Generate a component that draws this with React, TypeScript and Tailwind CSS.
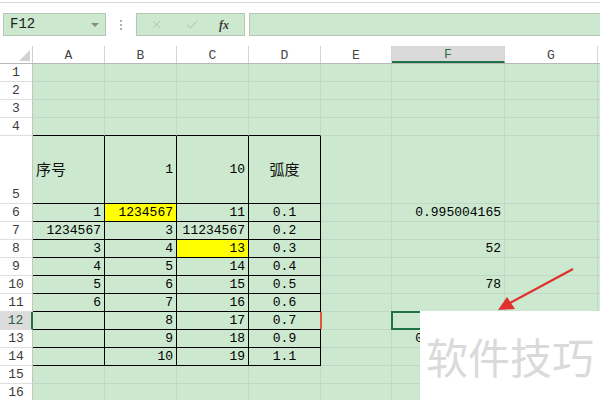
import { X, Check } from "lucide-react";

type Cell = { t: string; a?: "l" | "r" | "c"; y?: boolean; cjk?: boolean };
type Row = { n: number; h: string; cells: Record<string, Cell> };

const cols = [
	{ k: "A", w: "w-[72px]" },
	{ k: "B", w: "w-[72px]" },
	{ k: "C", w: "w-[72px]" },
	{ k: "D", w: "w-[72px]" },
	{ k: "E", w: "w-[71px]" },
	{ k: "F", w: "w-[113px]" },
	{ k: "G", w: "w-[93px]" },
];

const tableCols = ["A", "B", "C", "D"];

const body: [string, string, string, string][] = [
	["1", "1234567", "11", "0.1"],
	["1234567", "3", "11234567", "0.2"],
	["3", "4", "13", "0.3"],
	["4", "5", "14", "0.4"],
	["5", "6", "15", "0.5"],
	["6", "7", "16", "0.6"],
	["", "8", "17", "0.7"],
	["", "9", "18", "0.9"],
	["", "10", "19", "1.1"],
];

const fCol: Record<number, string> = {
	6: "0.995004165",
	8: "52",
	10: "78",
	13: "0.921060994",
};

const rows: Row[] = [];
for (let n = 1; n <= 16; n++) {
	const cells: Record<string, Cell> = {};
	if (n === 5) {
		cells.A = { t: "序号", a: "l", cjk: true };
		cells.B = { t: "1", a: "r" };
		cells.C = { t: "10", a: "r" };
		cells.D = { t: "弧度", a: "c", cjk: true };
	}
	if (n >= 6 && n <= 14) {
		const v = body[n - 6];
		cells.A = { t: v[0], a: "r" };
		cells.B = { t: v[1], a: "r", y: n === 6 };
		cells.C = { t: v[2], a: "r", y: n === 8 };
		cells.D = { t: v[3], a: "c" };
	}
	if (fCol[n]) cells.F = { t: fCol[n], a: "r" };
	rows.push({ n, h: n === 5 ? "h-[68px]" : "h-[18px]", cells });
}

const inTable = (r: number, k: string) => tableCols.includes(k) && r >= 5 && r <= 14;

const SheetCell = ({ row, k, w }: { row: Row; k: string; w: string }) => {
	const c = row.cells[k];
	const right = inTable(row.n, k) ? "border-r-black" : "border-r-[#c3d5c5]";
	const bottom =
		tableCols.includes(k) && row.n >= 4 && row.n <= 14 ? "border-b-black" : "border-b-[#c3d5c5]";
	const align =
		c?.a === "r" ? "justify-end pr-[3px]" : c?.a === "c" ? "justify-center" : "justify-start pl-[3px]";
	return (
		<div
			className={`${w} shrink-0 relative flex items-center border-r border-b ${right} ${bottom} ${align} ${
				c?.y ? "bg-[#ffff00]" : ""
			}`}
		>
			{c && (
				<span
					className={
						c.cjk
							? "text-[15px] text-[#111] font-['Noto_Sans_CJK_SC',sans-serif]"
							: "text-[13px] text-black font-['Liberation_Mono',monospace] leading-none"
					}
				>
					{c.t}
				</span>
			)}
			{row.n === 12 && k === "F" && (
				<div className="absolute -top-px -left-px -right-px -bottom-px border-2 border-[#217346]" />
			)}
			{row.n === 12 && k === "E" && (
				<div className="absolute -left-px top-0 bottom-0 w-[2px] bg-[#e2553a]" />
			)}
		</div>
	);
};

export default function App() {
	return (
		<div className="w-[600px] h-[400px] bg-white relative overflow-hidden font-['Liberation_Mono',monospace]">
			<div className="h-[2px]" />
			<div className="h-[11px] border-t border-[#d8d8d8]" />

			{/* formula bar */}
			<div className="flex h-[23px] pl-[3px]">
				<div className="w-[103px] flex items-center justify-between bg-[#cce8cf] border border-[#b4c6b6] pl-[6px] pr-[6px]">
					<span className="text-[14px] text-[#222]">F12</span>
					<div className="w-0 h-0 border-l-[4px] border-r-[4px] border-t-[4px] border-l-transparent border-r-transparent border-t-[#8a8a8a]" />
				</div>
				<div className="w-[30px] flex flex-col items-center justify-center gap-[2px]">
					<div className="w-[2px] h-[2px] bg-[#b0b0b0]" />
					<div className="w-[2px] h-[2px] bg-[#b0b0b0]" />
					<div className="w-[2px] h-[2px] bg-[#b0b0b0]" />
				</div>
				<div className="w-[109px] flex items-center bg-[#cce8cf] border border-[#b4c6b6]">
					<div className="w-[38px] flex justify-center">
						<X size={13} strokeWidth={1.4} color="#a5b5a7" />
					</div>
					<div className="w-[34px] flex justify-center">
						<Check size={14} strokeWidth={1.4} color="#a5b5a7" />
					</div>
					<div className="w-[30px] flex justify-center">
						<span className="text-[12px] italic font-bold text-[#3a3a3a] font-['Liberation_Serif',serif]">fx</span>
					</div>
				</div>
				<div className="ml-[4px] flex-1 bg-[#cce8cf] border border-[#b4c6b6] border-r-0" />
			</div>

			<div className="h-[10px]" />

			{/* column headers */}
			<div className="flex h-[18px] border-b border-[#b8b8b8]">
				<div className="w-[33px] shrink-0 relative border-r border-[#d0d0d0]">
					<svg className="absolute right-[2px] bottom-[2px]" width="11" height="11" viewBox="0 0 11 11">
						<polygon points="11,0 11,11 0,11" fill="#d2d2d2" />
					</svg>
				</div>
				{cols.map((c) => (
					<div
						key={c.k}
						className={`${c.w} shrink-0 flex items-center justify-center pt-[2px] border-r border-[#d4d4d4] text-[13px] ${
							c.k === "F" ? "bg-[#dadada] text-[#2f6b46] border-b-2 border-b-[#217346]" : "text-[#444]"
						}`}
					>
						{c.k}
					</div>
				))}
				<div className="flex-1" />
			</div>

			{/* rows */}
			{rows.map((row) => (
				<div key={row.n} className={`flex ${row.h} bg-[#cce8cf]`}>
					<div
						className={`w-[33px] shrink-0 flex items-end justify-center text-[13px] leading-[17px] border-b border-[#dedede] ${
							row.n === 12
								? "bg-[#dcdcdc] text-[#2f5f42] border-r-2 border-r-[#217346]"
								: "bg-white text-[#3c3c3c] border-r border-r-[#c4c4c4]"
						}`}
					>
						{row.n}
					</div>
					{cols.map((c) => (
						<SheetCell key={c.k} row={row} k={c.k} w={c.w} />
					))}
					<div className="flex-1 border-b border-[#c3d5c5]" />
				</div>
			))}

			{/* watermark box */}
			<div className="absolute left-[420px] top-[311px] w-[180px] h-[89px] bg-white flex items-center pl-[6px]">
				<span className="text-[42px] leading-none text-[#dadada] font-['Noto_Sans_CJK_SC',sans-serif]">软件技巧</span>
			</div>

			{/* arrow */}
			<svg className="absolute left-0 top-0 pointer-events-none" width="600" height="400" viewBox="0 0 600 400">
				<line x1="573" y1="269" x2="508" y2="304" stroke="#e0302f" strokeWidth="2.2" />
				<polygon points="498,310 507,297 515,309" fill="#e0302f" />
			</svg>
		</div>
	);
}
